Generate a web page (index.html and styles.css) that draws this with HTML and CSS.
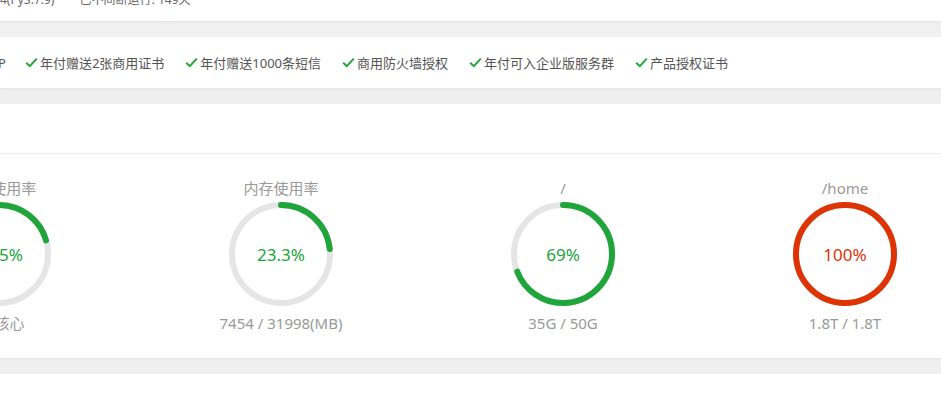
FILE: index.html
```html
<!DOCTYPE html>
<html lang="zh-CN">
<head>
    <meta charset="UTF-8">
    <meta name="viewport" content="width=device-width, initial-scale=1.0">
    <title>面板首页</title>
    <link rel="stylesheet" href="styles.css">
</head>
<body>

    <div class="panel info-bar">
        <div class="info-line">
            <span class="info-item">4(Py3.7.9)</span>
            <span class="info-item">已不间断运行: 149天</span>
        </div>
    </div>

    <div class="panel feature-bar">
        <span class="feature lead">P</span>
        <span class="feature">
            <svg class="check" viewBox="0 0 13 11"><path d="M1.2 5.8 L4.8 9.2 L11.8 1.6"/></svg>年付赠送2张商用证书
        </span>
        <span class="feature">
            <svg class="check" viewBox="0 0 13 11"><path d="M1.2 5.8 L4.8 9.2 L11.8 1.6"/></svg>年付赠送1000条短信
        </span>
        <span class="feature">
            <svg class="check" viewBox="0 0 13 11"><path d="M1.2 5.8 L4.8 9.2 L11.8 1.6"/></svg>商用防火墙授权
        </span>
        <span class="feature">
            <svg class="check" viewBox="0 0 13 11"><path d="M1.2 5.8 L4.8 9.2 L11.8 1.6"/></svg>年付可入企业版服务群
        </span>
        <span class="feature">
            <svg class="check" viewBox="0 0 13 11"><path d="M1.2 5.8 L4.8 9.2 L11.8 1.6"/></svg>产品授权证书
        </span>
    </div>

    <div class="panel status">
        <div class="status-head"></div>
        <div class="status-body">
            <div class="gauges" id="gauges"></div>
        </div>
    </div>

    <div class="panel footer"></div>

    <script>
        // r = 49 -> circumference used for the dash length of each arc
        const CIRC = 2 * Math.PI * 49;

        const gauges = [
            { title: "CPU使用率", value: 20.5, label: "20.5%", info: "16 核心" },
            { title: "内存使用率", value: 23.3, label: "23.3%", info: "7454 / 31998(MB)" },
            { title: "/", value: 69, label: "69%", info: "35G / 50G" },
            { title: "/home", value: 100, label: "100%", info: "1.8T / 1.8T" }
        ];

        function gaugeHtml(g) {
            const full = g.value >= 90 ? " danger" : "";
            const len = (g.value / 100) * CIRC;
            return `
                <div class="gauge${full}">
                    <h3 class="gauge-title">${g.title}</h3>
                    <div class="ring">
                        <svg viewBox="0 0 104 104">
                            <circle class="track" cx="52" cy="52" r="49"/>
                            <circle class="bar" cx="52" cy="52" r="49"
                                stroke-dasharray="${len.toFixed(2)} ${CIRC.toFixed(2)}"
                                transform="rotate(-90 52 52)"/>
                        </svg>
                        <span class="ring-value">${g.label}</span>
                    </div>
                    <p class="gauge-info">${g.info}</p>
                </div>`;
        }

        document.getElementById("gauges").innerHTML = gauges.map(gaugeHtml).join("");
    </script>

</body>
</html>
```

FILE: styles.css
```css
body {
    margin: 0;
    padding: 0;
    background-color: #f0f0f0;
    font-family: "Noto Sans", "Noto Sans CJK SC", sans-serif;
    color: #666;
    overflow: hidden;
}
.panel {
    background-color: #fff;
    box-shadow: 0 1px 3px rgba(0, 0, 0, 0.06);
}
.info-bar {
    height: 21px;
    overflow: hidden;
    margin-bottom: 16px;
}
.info-line {
    margin-top: -9px;
    font-size: 12px;
    line-height: 17px;
    color: #666;
}
.info-item {
    margin-right: 22px;
}
.feature-bar {
    height: 51px;
    margin-bottom: 16px;
    display: flex;
    align-items: center;
    gap: 21px;
    font-size: 13px;
    color: #555;
    white-space: nowrap;
}
.feature.lead {
    margin-left: -2px;
    margin-right: -2px;
}
.feature {
    display: flex;
    align-items: center;
}
.check {
    width: 13px;
    height: 11px;
    margin-right: 2px;
}
.check path {
    fill: none;
    stroke: #20a53a;
    stroke-width: 2;
}
.status {
    height: 254px;
    margin-bottom: 16px;
}
.status-head {
    height: 49px;
    border-bottom: 1px solid #ebebeb;
}
.status-body {
    padding-top: 24px;
}
.gauges {
    display: flex;
    margin-left: -142px;
}
.gauge {
    flex: 0 0 282px;
    display: flex;
    flex-direction: column;
    align-items: center;
}
.gauge-title {
    margin: 0;
    font-size: 15px;
    font-weight: normal;
    line-height: 20px;
    color: #999;
}
.ring {
    display: grid;
    place-items: center;
    width: 104px;
    height: 104px;
    margin-top: 4px;
}
.ring svg,
.ring-value {
    grid-area: 1 / 1;
}
.ring svg {
    width: 104px;
    height: 104px;
}
.track {
    fill: none;
    stroke: #e5e5e5;
    stroke-width: 6;
}
.bar {
    fill: none;
    stroke: #20a53a;
    stroke-width: 6;
    stroke-linecap: round;
}
.ring-value {
    font-size: 17px;
    color: #20a53a;
}
.danger .bar {
    stroke: #dd3305;
}
.danger .ring-value {
    color: #dd3305;
}
.gauge-info {
    margin: 7px 0 0;
    font-size: 15px;
    line-height: 20px;
    color: #999;
}
.footer {
    height: 60px;
}
```
